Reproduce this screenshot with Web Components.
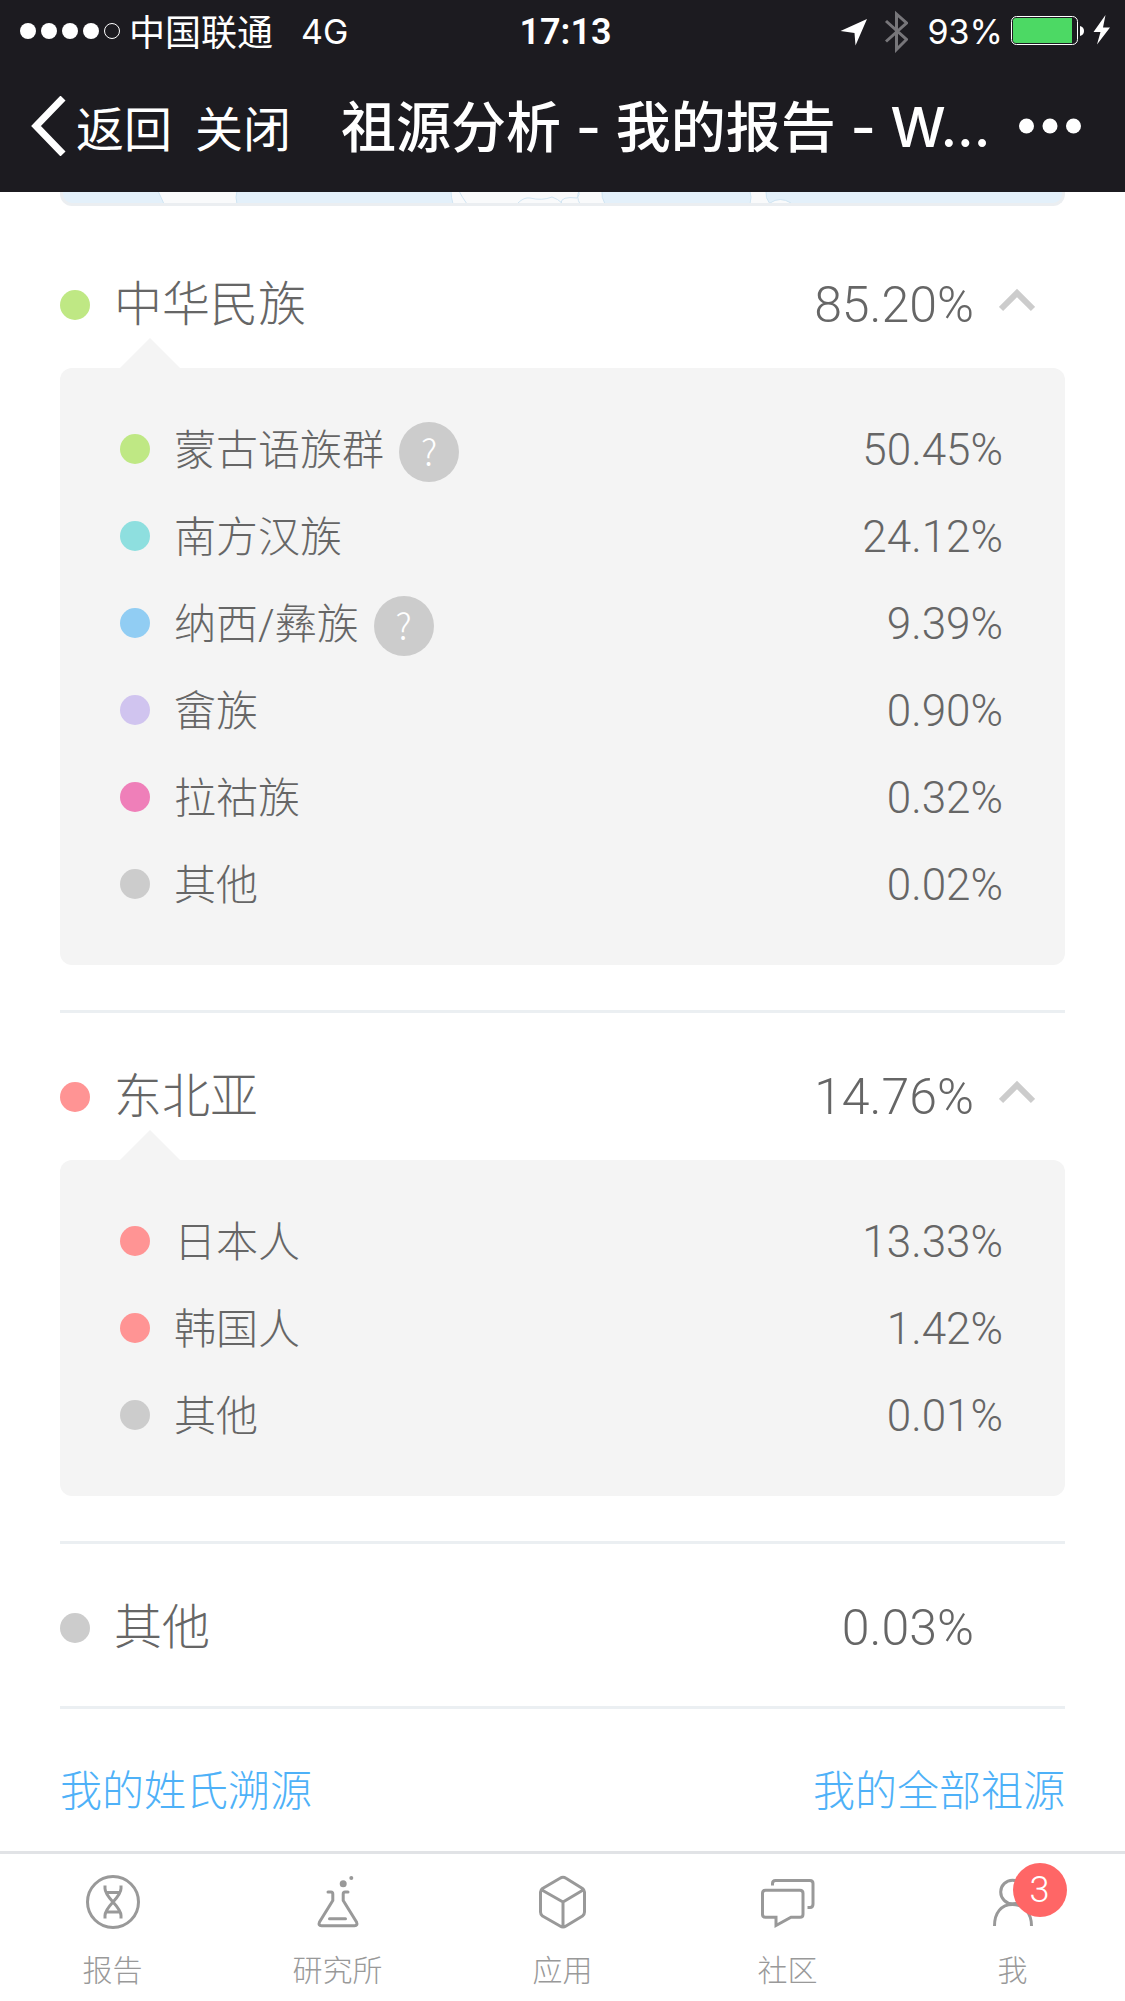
<!DOCTYPE html>
<html lang="zh-CN">
<head>
<meta charset="utf-8">
<meta name="viewport" content="width=device-width, initial-scale=1">
<title>祖源分析</title>
<style>
  body { margin: 0; background: #fff; color: #666; font-family: "Noto Sans CJK SC", sans-serif; font-weight: 300; }
</style>
</head>
<body>
<app-shell>
  <status-bar slot="top" carrier="中国联通" network="4G" time="17:13" battery="93%"></status-bar>
  <title-bar slot="top">祖源分析 - 我的报告 - W...</title-bar>

  <map-strip></map-strip>

  <origin-group name="中华民族" value="85.20%" color="#bfe884" open>
    <origin-item value="50.45%" color="#bfe884" help>蒙古语族群</origin-item>
    <origin-item value="24.12%" color="#8edfdf">南方汉族</origin-item>
    <origin-item value="9.39%" color="#91cdf3" help>纳西/彝族</origin-item>
    <origin-item value="0.90%" color="#d0c4ef">畲族</origin-item>
    <origin-item value="0.32%" color="#ef7fb9">拉祜族</origin-item>
    <origin-item value="0.02%" color="#cccccc">其他</origin-item>
  </origin-group>
  <origin-group name="东北亚" value="14.76%" color="#ff9494" open>
    <origin-item value="13.33%" color="#ff9494">日本人</origin-item>
    <origin-item value="1.42%" color="#ff9494">韩国人</origin-item>
    <origin-item value="0.01%" color="#cccccc">其他</origin-item>
  </origin-group>
  <origin-group name="其他" value="0.03%" color="#cccccc"></origin-group>
  <link-row></link-row>

  <tab-bar slot="bottom">
    <tab-item icon="report">报告</tab-item>
    <tab-item icon="lab">研究所</tab-item>
    <tab-item icon="apps">应用</tab-item>
    <tab-item icon="chat">社区</tab-item>
    <tab-item icon="me" badge="3">我</tab-item>
  </tab-bar>
</app-shell>

<script>
const LATIN = '"Inter", "Noto Sans CJK SC", sans-serif';
const NUMERIC = '"Roboto", "Liberation Sans", sans-serif';
const NAMES = '"Roboto", "Noto Sans CJK SC", sans-serif';

class BaseElement extends HTMLElement {
  connectedCallback() {
    if (this.shadowRoot) return;
    this.attachShadow({ mode: 'open' }).innerHTML =
      `<style>:host,*{box-sizing:border-box}svg{display:block;flex:none}${this.styles()}</style>${this.markup()}`;
  }
  attr(name) { return this.getAttribute(name) || ''; }
}

customElements.define('app-shell', class extends BaseElement {
  styles() { return `
    :host { display: flex; flex-direction: column; min-height: 100vh; }
    header { background: #1c1b20; color: #fff; }
    main { flex: 1; padding: 0 60px; }
    footer { position: sticky; bottom: 0; }`; }
  markup() { return `<header><slot name="top"></slot></header><main><slot></slot></main><footer><slot name="bottom"></slot></footer>`; }
});

customElements.define('status-bar', class extends BaseElement {
  styles() { return `
    :host { display: grid; grid-template-columns: 1fr auto 1fr; align-items: center; height: 60px; padding: 0 14px 0 20px; font: 400 34px/60px ${LATIN}; }
    .left, .right { display: flex; align-items: center; }
    .right { justify-content: flex-end; }
    .carrier { margin: 0 28px 0 8px; padding-bottom: 2px; font: 400 36px/56px "Noto Sans CJK SC", sans-serif; }
    .network, .time, .percent { padding-top: 2px; }
    .time { font: 600 36px/58px ${NUMERIC}; }
    .percent { margin: 0 8px 0 20px; }`; }
  markup() { return `
    <div class="left">
      <svg width="101" height="16" viewBox="0 0 101 16" fill="#fff" role="img" aria-label="signal">
        <circle cx="8" cy="8" r="8"/><circle cx="29" cy="8" r="8"/><circle cx="50" cy="8" r="8"/><circle cx="71" cy="8" r="8"/>
        <circle cx="92" cy="8" r="7.500" fill="none" stroke="#fff"/>
      </svg>
      <span class="carrier">${this.attr('carrier')}</span><span class="network">${this.attr('network')}</span>
    </div>
    <span class="time">${this.attr('time')}</span>
    <div class="right">
      <svg width="68" height="44" viewBox="840 8 68 44" aria-hidden="true">
        <path d="M867 18 840.500 30l14 2 1 12.500z" fill="#fff"/>
        <path d="M886 20l20.500 18.500-10 10V13l10 9L886 40.500" fill="none" stroke="#77767a" stroke-width="3"/>
      </svg>
      <span class="percent">${this.attr('battery')}</span>
      <svg width="100" height="32" viewBox="1011 15 100 32" aria-hidden="true">
        <rect x="1011.500" y="16.500" width="66" height="28" rx="5" fill="none" stroke="#fff"/>
        <path d="M1016 18h56v25h-56q-3 0-3-3V21q0-3 3-3z" fill="#4cd964"/>
        <path d="M1080 26q4 1 4 5t-4 5z" fill="#fff"/>
        <path d="M1105.500 15 1093.500 32h7l-3.500 12.500L1110 27.500h-7z" fill="#fff"/>
      </svg>
    </div>`; }
});

customElements.define('title-bar', class extends BaseElement {
  styles() { return `
    :host { display: flex; align-items: center; height: 132px; padding: 0 44px 0 31px; }
    button { display: flex; align-items: center; gap: 10px; border: 0; padding: 0; background: none; color: inherit; font: 400 48px/60px "Noto Sans CJK SC", sans-serif; cursor: pointer; }
    .close { margin-left: 23px; }
    h1 { flex: 1; min-width: 0; margin: 2px 0 0 50px; overflow: hidden; white-space: nowrap; font: 500 55px/72px ${LATIN}; }`; }
  markup() { return `
    <button type="button"><svg width="35" height="60" viewBox="0 0 35 60" fill="none" stroke="#fff" stroke-width="7"><path d="M32 2 5 30 32 58"/></svg>返回</button>
    <button type="button" class="close">关闭</button>
    <h1><slot></slot></h1>
    <button type="button" aria-label="更多"><svg width="62" height="16" viewBox="0 0 62 16" fill="#fff"><circle cx="7.500" cy="8" r="7.500"/><circle cx="31" cy="8" r="7.500"/><circle cx="54.500" cy="8" r="7.500"/></svg></button>`; }
});

customElements.define('map-strip', class extends BaseElement {
  styles() { return `
    :host { display: block; height: 14px; margin-bottom: 15px; border: solid #ebeef1; border-width: 0 3px 3px; border-radius: 0 0 12px 12px; overflow: hidden; background: #e3f0fa; }
    svg { width: 100%; height: 11px; }`; }
  markup() { return `
    <svg viewBox="0 0 999 11" preserveAspectRatio="none" fill="#f9fafb" stroke="#cfe4f2" stroke-width="1" aria-hidden="true">
      <path d="M95-1q3 6 6 13h73q-2-7 0-13zM388-1q0 6 2 13h152q-4-7-3-13zM687-1q2 6 0 13h20q-5-6-4-13z"/>
      <path d="M396-1q3 6 8 13M455 11q6-6 12-5 12 3 22-1 6 2 10 6M498 11q0-7 16-5 3-3 2-7M516-1q-3 6 1 13M707 11q10-7 21 0" />
    </svg>`; }
});

customElements.define('origin-group', class extends BaseElement {
  styles() { return `
    :host { display: block; border-bottom: 3px solid #ebeff2; }
    h2 { margin: 0; font: inherit; }
    .head { display: flex; align-items: center; width: 100%; height: 162px; border: 0; padding: 54px 30px 48px 0; background: none; color: inherit; text-align: left; font: 300 48px/50px ${NAMES}; }
    :host([open]) .head { height: 147px; padding-bottom: 33px; cursor: pointer; }
    .dot { width: 30px; height: 30px; margin-right: 24px; border-radius: 50%; background: ${this.attr('color')}; }
    .name { flex: 1; }
    .value { margin-right: 25px; font-family: ${NUMERIC}; font-size: 50px; }
    .panel { position: relative; margin-bottom: 45px; padding: 37px 60px 38px; border-radius: 12px; background: #f4f4f4; }
    .panel::before { content: ""; position: absolute; left: 60px; bottom: 100%; border: solid transparent; border-width: 0 30px 30px; border-bottom-color: #f4f4f4; }`; }
  markup() {
    const open = this.hasAttribute('open');
    const tag = open ? 'button' : 'div';
    return `
    <h2><${tag} class="head" ${open ? 'type="button" aria-expanded="true"' : ''}>
      <span class="dot"></span><span class="name">${this.attr('name')}</span><span class="value">${this.attr('value')}</span>
      <svg width="36" height="36" viewBox="0 0 36 36" fill="none" stroke="#ccc" stroke-width="6">${open ? '<path d="M2 22 18 6l16 16"/>' : ''}</svg>
    </${tag}></h2>
    ${open ? '<div class="panel" role="list"><slot></slot></div>' : ''}`;
  }
});

customElements.define('origin-item', class extends BaseElement {
  connectedCallback() { this.setAttribute('role', 'listitem'); super.connectedCallback(); }
  styles() { return `
    :host { display: flex; align-items: center; height: 87px; font: 300 42px/60px ${NAMES}; }
    .dot { width: 30px; height: 30px; margin-right: 24px; border-radius: 50%; background: ${this.attr('color')}; }
    .name { padding-top: 4px; }
    button { width: 60px; height: 60px; margin: 6px 0 0 15px; border: 0; border-radius: 50%; padding: 0 0 4px; background: #ccc; color: #fff; font: 300 36px/56px "Noto Sans CJK SC", sans-serif; cursor: pointer; }
    .value { margin: 0 2px 0 auto; padding-top: 2px; font-family: ${NUMERIC}; font-size: 44px; }`; }
  markup() { return `
    <span class="dot"></span><span class="name"><slot></slot></span>
    ${this.hasAttribute('help') ? '<button type="button">?</button>' : ''}
    <span class="value">${this.attr('value')}</span>`; }
});

customElements.define('link-row', class extends BaseElement {
  styles() { return `
    :host { display: flex; justify-content: space-between; padding: 49px 0 33px; font-size: 42px; line-height: 60px; }
    a { color: #4eb1f8; text-decoration: none; }`; }
  markup() { return `<a href="#surname">我的姓氏溯源</a><a href="#all">我的全部祖源</a>`; }
});

customElements.define('tab-bar', class extends BaseElement {
  styles() { return `
    :host { display: block; border-top: 3px solid #e1e3e6; background: #fff; }
    nav { display: flex; height: 147px; }`; }
  markup() { return `<nav><slot></slot></nav>`; }
});

const TAB_ICONS = {
  report: `<circle cx="27" cy="27" r="25.500"/><path d="M19 10.500v3C19 23 35 31 35 40.500v3M35 10.500v3C35 23 19 31 19 40.500v3M20 17.500h14M20 37h14"/>`,
  lab: `<path stroke-linecap="round" stroke-linejoin="round" d="M17 17h3q1.800 0 1.800 2v6.500L8.500 47q-1.500 3.700 2 3.700h33q3.500 0 2-3.700L32.200 25.500V19q0-2 1.800-2h3M18.500 43.700h16"/><circle cx="32.200" cy="8.700" r="3.500" fill="#999" stroke="none"/><circle cx="40.300" cy="3" r="2" fill="#999" stroke="none"/>`,
  apps: `<path stroke-linejoin="round" d="M24 3.200q3-2 6 0L46.500 13.500q2 1.500 2 3.500v20q0 2.500-2 4L30 51q-3 2-6 0L6.500 41q-2-1.500-2-4V17q0-2 2-3.500zM5 14.500 27 27l21-12.500M27 27v25"/>`,
  chat: `<path d="M11.500 10.500V8.500q0-3 3-3h34.500q3 0 3 3V29q0 3.500-3 3.500h-2.500M4.500 15.300h34.500q3 0 3 3v21q0 3-3 3h-9L15 50.500v-8.200H4.500q-3 0-3-3v-21q0-3 3-3z"/>`,
  me: `<circle cx="26.500" cy="17" r="11.800"/><path d="M8.500 51C8.500 38 15 29.500 26.500 29.500S45.500 38 45.500 51"/>`
};

customElements.define('tab-item', class extends BaseElement {
  styles() { return `
    :host { display: block; flex: 1; }
    a { display: flex; flex-direction: column; align-items: center; gap: 19px; padding-top: 21px; color: #999; text-decoration: none; font-size: 30px; line-height: 40px; }
    .icon { position: relative; }
    .badge { position: absolute; left: 27px; top: -12px; width: 54px; height: 54px; border-radius: 50%; background: #f66; color: #fff; text-align: center; font: 300 36px/54px ${NUMERIC}; }`; }
  markup() { return `
    <a href="#${this.attr('icon')}">
      <span class="icon"><svg width="54" height="54" viewBox="0 0 54 54" fill="none" stroke="#999" stroke-width="3">${TAB_ICONS[this.attr('icon')]}</svg>
      ${this.hasAttribute('badge') ? `<span class="badge">${this.attr('badge')}</span>` : ''}</span>
      <span><slot></slot></span>
    </a>`; }
});
</script>
</body>
</html>
